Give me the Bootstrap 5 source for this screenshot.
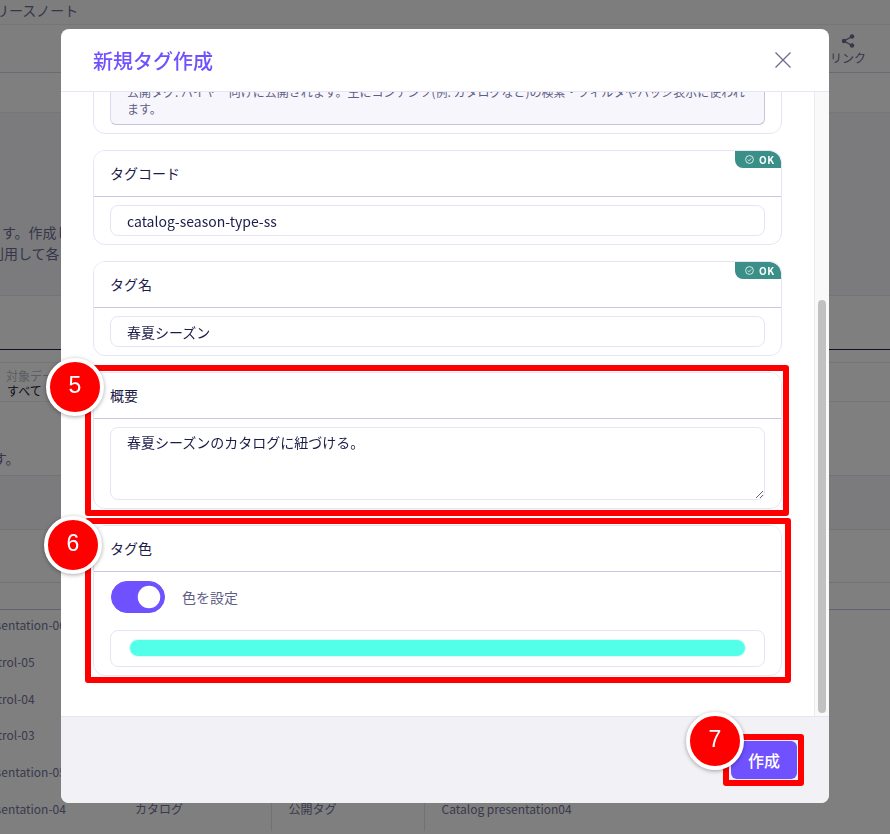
<!DOCTYPE html>
<html lang="ja">
<head>
<meta charset="utf-8">
<title>新規タグ作成</title>
<link href="https://cdn.jsdelivr.net/npm/bootstrap@5.3.0/dist/css/bootstrap.min.css" rel="stylesheet">
<style>
html,body{height:100%;overflow:hidden}
body{font-family:"Noto Sans CJK JP","Noto Sans",sans-serif;font-size:14px;color:#1c1c4a;background:#fff}
.pg{width:890px;height:834px;overflow:hidden;position:relative;background:#fff;color:#6c6c94}
.pg-top{height:25px;background:#fafafa;border-bottom:1px solid #ececf2;line-height:21px;padding-left:0;white-space:nowrap;text-indent:-19px}
.pg-tool{height:48px;background:#fdfdfd;border-bottom:1px solid #d4d2ec;padding-right:24px}
.pg-link{font-size:12px;line-height:14px;color:#6c6c94;text-align:center;width:36px;padding-top:9px}
.pg-link svg{display:block;margin:0 auto 3px}
.pg-sub{height:40px;background:#fff;border-bottom:1px solid #ececf2}
.pg-desc{height:183px;background:#f6f6fa;padding-top:109px;line-height:21px;color:#6c6c94;white-space:nowrap;border-bottom:1px solid #e8e8f0}
.pg-desc p{margin:0}
.pg-d1{padding-left:2px}.pg-d2{text-indent:-10px}
.pg-band{height:54px;background:#fff;border-bottom:1px solid #1c1c5a}
.pg-gap{height:12px;background:#fff}
.pg-info{height:40px;background:#fff;border-top:1px solid #ececf2;border-bottom:1px solid #ececf2;padding:5px 6px 0;font-size:12px;line-height:15px}
.pg-info b{display:block;font-weight:400;color:#b8b8c8}
.pg-info span{color:#202040;padding-left:1px}
.pg-note{height:74px;background:#fff;border-bottom:1px solid #e4e4ec;padding-top:47px;line-height:18px;text-indent:-7px;color:#6c6c94;white-space:nowrap}
.pg-b1{height:54px;background:#f6f6fa;border-bottom:1px solid #e8e8f0}
.pg-b2{height:53px;background:#fff;border-bottom:1px solid #e4e4ec}
.pg-head{height:27px;background:#fff;border-bottom:1px solid #c4c2e0}
.pg-tbl{table-layout:fixed;width:612px;margin-left:-35px;font-size:12px;border-collapse:collapse;color:#74749a}
.pg-tbl td{width:153px;height:36.8px;padding:6px 17px;vertical-align:top;line-height:18px;white-space:nowrap;overflow:hidden}
.pg-tbl td:first-child{padding-left:12px}
.pg-tbl td.sep{border-right:1px solid #e4e4ec}

.dlg{max-width:768px;width:768px;margin:29px auto 0}
.dlg-box{height:774px;border:0;border-radius:8px;overflow:hidden;background:#fff}
.dlg-head{height:63px;padding:0 32px;border-bottom:1px solid #e7e5f5}
.dlg-title{font-size:20px;font-weight:500;color:#7051ff;line-height:1;margin:0;padding-top:1px}
.dlg-x{background:none;border:0;padding:0;width:18px;height:18px;margin-right:5px;line-height:0}
.dlg-mid{flex:1 1 auto;min-height:0}
.dlg-body{flex:1 1 auto;min-width:0;min-height:0;overflow-y:scroll;padding:16px 32px 40px;scrollbar-width:none}
.dlg-body::-webkit-scrollbar{display:none}
.dlg-track{flex:0 0 15px;width:15px;background:#f9f9f9;border-left:1px solid #ececf0;padding:208px 3px 3px 3px}
.dlg-thumb{height:413px;background:#c1c1c1;border-radius:4px}
.dlg-foot{height:87px;padding:0 32px;background:#f1f1f6;border-top:1px solid #e7e5f5}
.dlg-go{width:66px;height:38px;padding:0;background:#7051ff;border:0;border-radius:6px;color:#fff;font-size:16px;font-weight:500}
.fcard{--bs-card-border-color:#e7e5f5;--bs-card-border-radius:12px;--bs-card-inner-border-radius:11px;position:relative;color:#1c1c4a}
.fcard-first{height:345px}
.fhead{height:46px;line-height:44px;padding:0 16px;background:#fff;border-bottom:1px solid #c9c7e2;font-size:14px;border-radius:11px 11px 0 0}
.fbody{padding:8px 16px}
.ffield{height:31px;padding:0 16px;border:1px solid #e7e5f5;border-radius:8px;font-size:14px;color:#1c1c4a;background:#fff}
textarea.ffield{height:73px;padding:4px 16px;line-height:20px;min-height:0}
.fnote{font-size:12px;line-height:17px;color:#5f5f85;background:#f7f6fc;border:1px solid #dcdaef;border-bottom-color:#c5c3e0;border-right-color:#c5c3e0;border-radius:6px;padding:0 16px 7px;margin:0}
.fok{top:0;right:0;width:46px;height:17px;background:#3a8f88;color:#fff;font-size:10px;font-weight:700;letter-spacing:.5px;border-radius:0 12px 0 8px;gap:5px;padding-left:10px;line-height:1}
.fswitch{height:32px;padding:0;margin:1px 0 0 1px;min-height:0;gap:17px}
.fswitch .form-check-input{width:54px;height:32px;margin:0;float:none;background-color:#7051ff;border-color:#7051ff}
.fswitch .form-check-label{color:#5f5f85;font-size:14px}
.fbox{height:37px;margin-top:17px;padding:8px 18px;border:1px solid #e7e5f5;border-radius:8px}
.fbar{height:18px;background:#52ffe9;border:1px solid #dff9f6;border-radius:9px}
.ov{position:fixed;inset:0;z-index:1060;pointer-events:none}
.rbox{position:absolute;border:6px solid #f00;border-radius:3px}
.r5{left:85px;top:365px;width:704px;height:151px}
.r6{left:85px;top:518px;width:706px;height:165px}
.r7{left:723px;top:734px;width:81px;height:52px}
.rdot{position:absolute;width:58px;height:58px;background:#f00;border:4px solid #fff;border-radius:50%;color:#fff;font:500 23px/46px "Liberation Sans",sans-serif;text-align:center;box-shadow:0 1px 4px rgba(0,0,0,.35)}
.d5{left:46px;top:358px}
.d6{left:44px;top:516px}
.d7{left:686px;top:712px}
</style>
</head>
<body>
<div class="pg">
  <div class="pg-top">リリースノート</div>
  <div class="pg-tool d-flex justify-content-end">
    <div class="pg-link"><svg width="14" height="14" viewBox="0 0 14 14"><path d="M11 2.5 3 7l8 4.5" fill="none" stroke="#6c6c94" stroke-width="1.4"/><circle cx="11" cy="2.5" r="2.2" fill="#6c6c94"/><circle cx="3" cy="7" r="2.2" fill="#6c6c94"/><circle cx="11" cy="11.5" r="2.2" fill="#6c6c94"/></svg>リンク</div>
  </div>
  <div class="pg-sub"></div>
  <div class="pg-desc"><p class="pg-d1">す。作成したタグはコンテンツに紐づけられます。</p><p class="pg-d2">利用して各コンテンツを分類します。</p></div>
  <div class="pg-band"></div>
  <div class="pg-gap"></div>
  <div class="pg-info"><b>対象データ</b><span>すべて</span></div>
  <div class="pg-note">す。</div>
  <div class="pg-b1"></div>
  <div class="pg-b2"></div>
  <div class="pg-head"></div>
  <table class="pg-tbl"><tbody>
    <tr><td>presentation-06</td><td class="sep">カタログ</td><td class="sep">公開タグ</td><td>Catalog presentation06</td></tr>
    <tr><td>control-05</td><td class="sep">カタログ</td><td class="sep">公開タグ</td><td>Catalog control05</td></tr>
    <tr><td>control-04</td><td class="sep">カタログ</td><td class="sep">公開タグ</td><td>Catalog control04</td></tr>
    <tr><td>control-03</td><td class="sep">カタログ</td><td class="sep">公開タグ</td><td>Catalog control03</td></tr>
    <tr><td>presentation-05</td><td class="sep">カタログ</td><td class="sep">公開タグ</td><td>Catalog presentation05</td></tr>
    <tr><td>presentation-04</td><td class="sep">カタログ</td><td class="sep">公開タグ</td><td>Catalog presentation04</td></tr>
  </tbody></table>
</div>

<div class="modal-backdrop show"></div>
<div class="modal d-block">
  <div class="modal-dialog dlg">
    <div class="modal-content dlg-box">
      <div class="modal-header dlg-head">
        <h5 class="dlg-title">新規タグ作成</h5>
        <button type="button" class="dlg-x ms-auto" aria-label="閉じる"><svg width="18" height="18" viewBox="0 0 18 18"><path d="M1.5 1.5l15 15M16.5 1.5l-15 15" stroke="#6b6b90" stroke-width="1.3" fill="none"/></svg></button>
      </div>
      <div class="dlg-mid d-flex">
      <div class="modal-body dlg-body d-flex flex-column gap-3" id="scroller">
        <div class="card fcard fcard-first flex-shrink-0">
          <div class="fhead">タグ種別</div>
          <div class="fbody d-flex flex-column flex-grow-1">
            <div class="form-check"><input class="form-check-input" type="radio" name="k" checked><label class="form-check-label">公開タグ</label></div>
            <div class="form-check"><input class="form-check-input" type="radio" name="k"><label class="form-check-label">非公開タグ</label></div>
            <p class="fnote mt-auto">公開タグ: バイヤー向けに公開されます。主にコンテンツ(例: カタログなど)の検索・フィルタやバッジ表示に使われます。</p>
          </div>
        </div>
        <div class="card fcard flex-shrink-0">
          <div class="fhead">タグコード</div>
          <div class="position-absolute fok d-flex align-items-center"><svg width="9" height="9" viewBox="0 0 9 9"><circle cx="4.5" cy="4.5" r="3.9" fill="none" stroke="#fff" stroke-width=".8"/><path d="M2.8 4.6l1.2 1.2 2.2-2.4" fill="none" stroke="#fff" stroke-width=".8"/></svg>OK</div>
          <div class="fbody"><input class="form-control ffield" value="catalog-season-type-ss"></div>
        </div>
        <div class="card fcard flex-shrink-0">
          <div class="fhead">タグ名</div>
          <div class="position-absolute fok d-flex align-items-center"><svg width="9" height="9" viewBox="0 0 9 9"><circle cx="4.5" cy="4.5" r="3.9" fill="none" stroke="#fff" stroke-width=".8"/><path d="M2.8 4.6l1.2 1.2 2.2-2.4" fill="none" stroke="#fff" stroke-width=".8"/></svg>OK</div>
          <div class="fbody"><input class="form-control ffield" value="春夏シーズン"></div>
        </div>
        <div class="card fcard flex-shrink-0">
          <div class="fhead">概要</div>
          <div class="fbody"><textarea class="form-control ffield">春夏シーズンのカタログに紐づける。</textarea></div>
        </div>
        <div class="card fcard flex-shrink-0">
          <div class="fhead">タグ色</div>
          <div class="fbody pt-2">
            <div class="form-check form-switch fswitch d-flex align-items-center">
              <input class="form-check-input" type="checkbox" role="switch" checked id="sw">
              <label class="form-check-label" for="sw">色を設定</label>
            </div>
            <div class="fbox"><div class="fbar"></div></div>
          </div>
        </div>
      </div>
      <div class="dlg-track"><div class="dlg-thumb"></div></div>
      </div>
      <div class="modal-footer dlg-foot d-flex align-items-center justify-content-end">
        <button type="button" class="btn dlg-go m-0">作成</button>
      </div>
    </div>
  </div>
</div>

<div class="ov">
  <div class="rbox r5"></div>
  <div class="rbox r6"></div>
  <div class="rbox r7"></div>
  <div class="rdot d5">5</div>
  <div class="rdot d6">6</div>
  <div class="rdot d7">7</div>
</div>
<script src="https://cdn.jsdelivr.net/npm/bootstrap@5.3.0/dist/js/bootstrap.bundle.min.js"></script>
<script>var s=document.getElementById('scroller');s.scrollTop=s.scrollHeight;</script>
</body>
</html>
